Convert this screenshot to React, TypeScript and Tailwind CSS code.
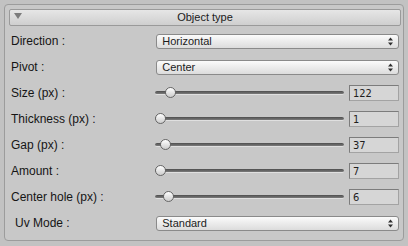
import React from "react";

const font = { fontFamily: '"Liberation Sans", Arial, sans-serif' };

const Arrows = () => (
  <svg width="5" height="9" viewBox="0 0 5 9" className="mr-[5px]">
    <path d="M2.5 0.5 L5 3.5 L0 3.5 Z" fill="#2e2e2e" />
    <path d="M2.5 8.5 L5 5.5 L0 5.5 Z" fill="#2e2e2e" />
  </svg>
);

const Popup = ({ value }: { value: string }) => (
  <div className="flex h-[15px] w-[244px] items-center justify-between rounded-[3px] border border-[#8a8a8a] bg-gradient-to-b from-[#fbfbfb] to-[#dcdcdc] pl-[5px] text-[11px] leading-none text-[#1c1c1c]">
    <span>{value}</span>
    <Arrows />
  </div>
);

const Slider = ({ value, thumb }: { value: string; thumb: number }) => (
  <div className="flex items-center">
    <div className="relative h-[16px] w-[189px]">
      <div className="absolute left-0 right-0 top-[6px] h-[4px] rounded-full border-b border-[#e0e0e0] bg-gradient-to-b from-[#4e4e4e] to-[#7c7c7c]" />
      <div
        className="absolute top-[2px] h-[11px] w-[11px] rounded-full border border-[#666666] bg-gradient-to-b from-[#ffffff] to-[#cdcdcd]"
        style={{ left: thumb }}
      />
    </div>
    <div
      className="ml-[5px] flex h-[16px] w-[50px] items-center border border-[#7c7c7c] border-r-[#a3a3a3] border-b-[#a3a3a3] bg-[#d6d6d6] pl-[3px] text-[11px] leading-none text-[#1e1e1e]"
      style={{ fontFamily: '"DejaVu Sans Condensed", "DejaVu Sans", sans-serif' }}
    >
      {value}
    </div>
  </div>
);

const Row = ({ label, children, indent }: { label: string; children: React.ReactNode; indent?: boolean }) => (
  <div className="flex h-[26px] items-center">
    <div className={`w-[148px] text-[12px] text-[#151515] ${indent ? "pl-[6px]" : "pl-[2px]"}`}>{label}</div>
    {children}
  </div>
);

export default function App() {
  return (
    <div className="h-[246px] w-[408px] bg-[#c2c2c2] pl-[4px] pt-[4px]" style={font}>
      <div className="w-[400px] rounded-[4px] border border-[#9c9c9c] bg-[#c8c8c8] px-[4px] pb-[4px] pt-[4px]">
        <div className="relative flex h-[17px] w-[392px] items-center justify-center rounded-[2px] border border-[#9a9a9a] bg-gradient-to-b from-[#e6e6e6] to-[#cfcfcf] text-[11px] text-[#1a1a1a]">
          <svg width="8" height="7" viewBox="0 0 8 7" className="absolute left-[4px] top-[3px]">
            <path d="M0 0 L8 0 L4 6 Z" fill="#7c7c7c" />
          </svg>
          <span>Object type</span>
        </div>
        <div className="mt-[2px]">
          <Row label="Direction :">
            <Popup value="Horizontal" />
          </Row>
          <Row label="Pivot :">
            <Popup value="Center" />
          </Row>
          <Row label="Size (px) :">
            <Slider value="122" thumb={10} />
          </Row>
          <Row label="Thickness (px) :">
            <Slider value="1" thumb={0} />
          </Row>
          <Row label="Gap (px) :">
            <Slider value="37" thumb={5} />
          </Row>
          <Row label="Amount :">
            <Slider value="7" thumb={0} />
          </Row>
          <Row label="Center hole (px) :">
            <Slider value="6" thumb={8} />
          </Row>
          <Row label="Uv Mode :" indent>
            <Popup value="Standard" />
          </Row>
        </div>
      </div>
    </div>
  );
}
